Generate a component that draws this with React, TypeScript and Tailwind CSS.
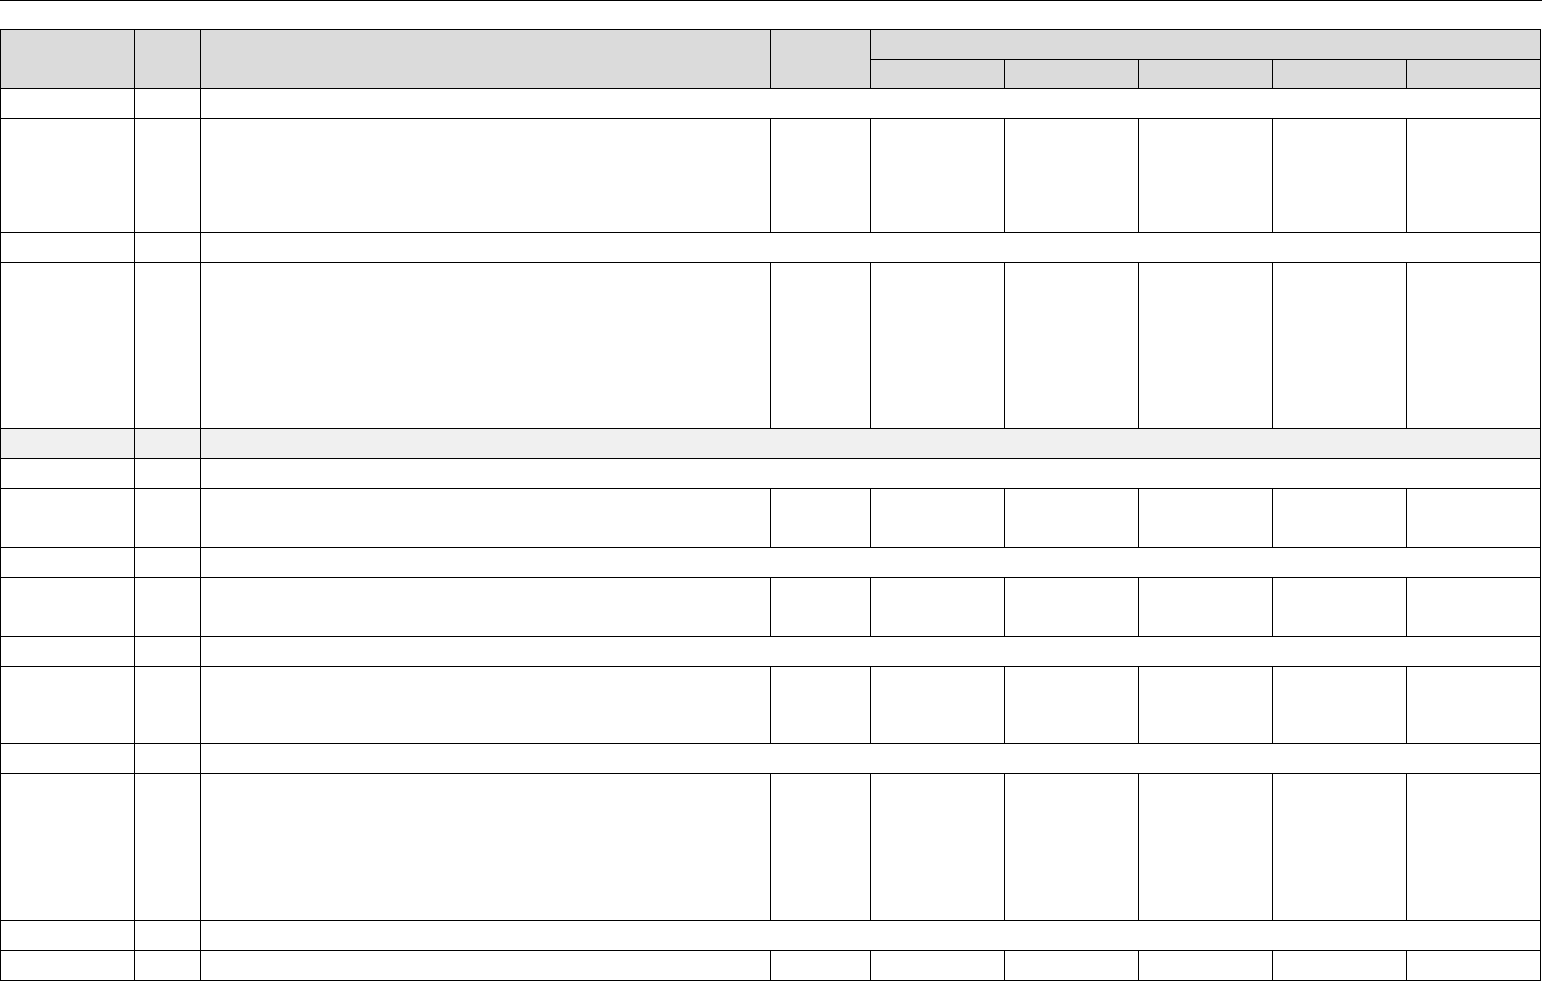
const cols = [134, 66, 570, 100, 134, 134, 134, 134, 134];

type Row = { h: number; kind: "section" | "full"; gray?: boolean };

const rows: Row[] = [
  { h: 30, kind: "section" },
  { h: 114, kind: "full" },
  { h: 30, kind: "section" },
  { h: 166, kind: "full" },
  { h: 30, kind: "section", gray: true },
  { h: 30, kind: "section" },
  { h: 59, kind: "full" },
  { h: 30, kind: "section" },
  { h: 59, kind: "full" },
  { h: 30, kind: "section" },
  { h: 77, kind: "full" },
  { h: 30, kind: "section" },
  { h: 147, kind: "full" },
  { h: 30, kind: "section" },
  { h: 30, kind: "full" },
];

const cell = "border border-black p-0";

const App = () => {
  return (
    <div className="min-h-screen bg-white font-['Liberation_Sans',sans-serif] text-sm text-black">
      <div className="h-px w-[1542px] bg-black" />
      <table className="mt-[28px] w-[1541px] table-fixed border-collapse">
        <colgroup>
          {cols.map((w, i) => (
            <col key={i} style={{ width: w }} />
          ))}
        </colgroup>
        <thead className="bg-[#dbdbdb]">
          <tr className="h-[30px]">
            <th rowSpan={2} className={cell}></th>
            <th rowSpan={2} className={cell}></th>
            <th rowSpan={2} className={cell}></th>
            <th rowSpan={2} className={cell}></th>
            <th colSpan={5} className={cell}></th>
          </tr>
          <tr className="h-[29px]">
            <th className={cell}></th>
            <th className={cell}></th>
            <th className={cell}></th>
            <th className={cell}></th>
            <th className={cell}></th>
          </tr>
        </thead>
        <tbody>
          {rows.map((r, i) => (
            <tr key={i} className={r.gray ? "bg-[#f0f0f0]" : "bg-white"} style={{ height: r.h }}>
              <td className={cell}></td>
              <td className={cell}></td>
              {r.kind === "section" ? (
                <td colSpan={7} className={cell}></td>
              ) : (
                <>
                  <td className={cell}></td>
                  <td className={cell}></td>
                  <td className={cell}></td>
                  <td className={cell}></td>
                  <td className={cell}></td>
                  <td className={cell}></td>
                  <td className={cell}></td>
                </>
              )}
            </tr>
          ))}
        </tbody>
      </table>
    </div>
  );
};

export default App;
